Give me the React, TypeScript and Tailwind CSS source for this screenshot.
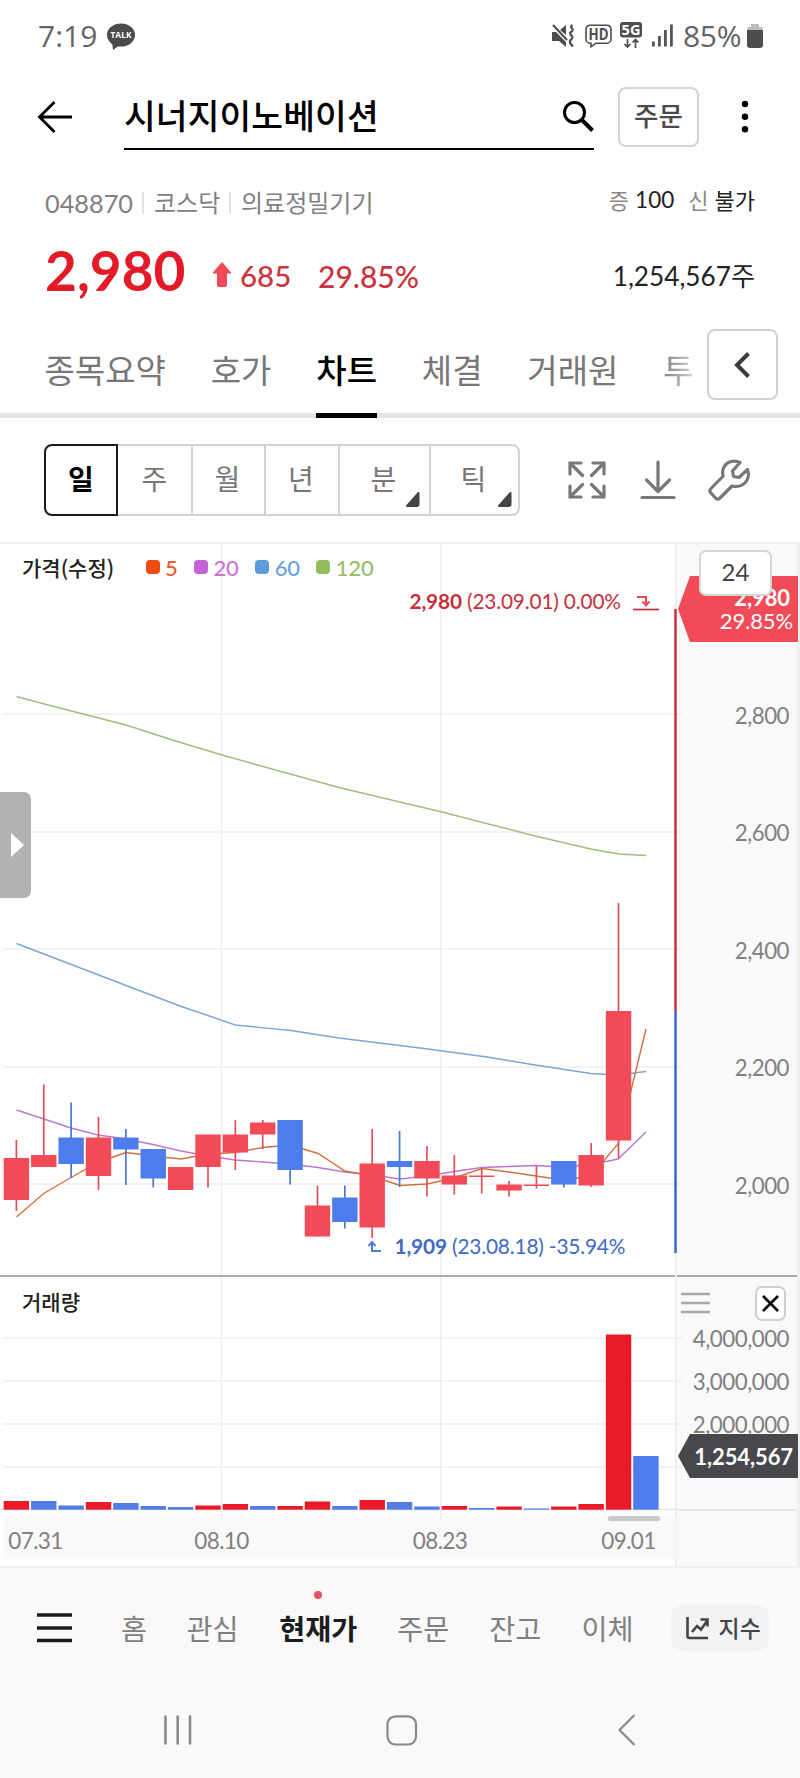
import type { ReactNode } from "react";

type Candle = {
  up: boolean;
  open: number;
  close: number;
  high: number;
  low: number;
  volume: number;
};

// y positions on the price pane, volume is the top of the bar
const candles: Candle[] = [
  { up: true, open: 1158, close: 1200, high: 1140, low: 1211, volume: 1501 },
  { up: true, open: 1155, close: 1167, high: 1084.5, low: 1167, volume: 1501 },
  { up: false, open: 1137.5, close: 1164, high: 1102.5, low: 1178, volume: 1505.5 },
  { up: true, open: 1137.5, close: 1176, high: 1117, low: 1190, volume: 1502 },
  { up: false, open: 1137.5, close: 1149.5, high: 1129, low: 1185, volume: 1503 },
  { up: false, open: 1149, close: 1178.5, high: 1149, low: 1187.5, volume: 1506 },
  { up: true, open: 1167, close: 1190, high: 1167, low: 1190, volume: 1507 },
  { up: true, open: 1134.5, close: 1167, high: 1134.5, low: 1187.5, volume: 1505.5 },
  { up: true, open: 1134.5, close: 1152.5, high: 1120, low: 1170, volume: 1504 },
  { up: true, open: 1122.5, close: 1134.5, high: 1120, low: 1149, volume: 1506 },
  { up: false, open: 1120, close: 1170, high: 1120, low: 1184.5, volume: 1506 },
  { up: true, open: 1205.5, close: 1236.5, high: 1185.5, low: 1236.5, volume: 1501.5 },
  { up: false, open: 1197.5, close: 1222, high: 1185.5, low: 1228.5, volume: 1506 },
  { up: true, open: 1163.5, close: 1227.5, high: 1129, low: 1238, volume: 1500 },
  { up: false, open: 1161, close: 1167, high: 1131, low: 1187, volume: 1502 },
  { up: true, open: 1161, close: 1178.5, high: 1146, low: 1196.5, volume: 1506.5 },
  { up: true, open: 1175.5, close: 1184.5, high: 1155, low: 1194.5, volume: 1506 },
  { up: true, open: 1175.5, close: 1177, high: 1168, low: 1193.5, volume: 1508 },
  { up: true, open: 1184.5, close: 1190.5, high: 1181, low: 1196.5, volume: 1506.5 },
  { up: true, open: 1184.5, close: 1186, high: 1166, low: 1188.5, volume: 1508.5 },
  { up: false, open: 1161, close: 1184.5, high: 1161, low: 1187.5, volume: 1506.5 },
  { up: true, open: 1155, close: 1185.5, high: 1143, low: 1187, volume: 1504 },
  { up: true, open: 1011, close: 1140.5, high: 903, low: 1158.5, volume: 1334.5 },
];

const volumeUp = [
  true, false, false, true, false, false, false, true, true, false, true, true,
  false, true, false, false, true, false, true, false, true, true, true,
];

const STEP = 27.37;
const centerX = (i: number) => 16.4 + i * STEP;

const averages = [
  {
    color: "#a3bd7c",
    points:
      "16.5,696.5 48,705 87,715 126,725 174,740.5 222,755 281,771.5 341,788 442,812 535,836 593,849.5 619,854 646,855.5",
  },
  {
    color: "#7aa8d4",
    points:
      "16.5,943.5 130,987 180,1006 235.5,1025 291,1030.5 339,1038 428,1049 487,1057 535,1065 591,1073.5 618,1075 646,1071.5",
  },
  {
    color: "#bc78cf",
    points:
      "16.5,1110 44,1119 71,1128 98,1135 126,1139 153,1144.5 181,1151 208,1156 235,1160 263,1162 290,1164 318,1167.5 345,1172 372,1175 400,1179 427,1176 454,1171.5 482,1167.5 509,1166.5 536,1165.5 563,1167 591,1164.5 618,1159 646,1132",
  },
  {
    color: "#d2713f",
    points:
      "16.5,1217 43.7,1193.5 71,1177.5 98.7,1162 126,1152.5 153,1156 181,1159 208,1154 235,1152.5 263,1147.5 290,1145 318,1153.5 345,1171 372,1176 400,1185.5 427,1184 454,1178 482,1168.5 509,1172 536,1176 563,1180 591,1176 618,1144 646,1029",
  },
];

const legend = [
  { label: "5", box: "bg-[#ee4b12]", text: "text-[#ee5a2a]" },
  { label: "20", box: "bg-[#c462d8]", text: "text-[#c774d8]" },
  { label: "60", box: "bg-[#5d9bdc]", text: "text-[#6a9fd8]" },
  { label: "120", box: "bg-[#93bd5f]", text: "text-[#97bd68]" },
];

function StatusBar() {
  return (
    <div className="flex h-[72px] items-center pl-[38px] pr-[37px] font-['Open_Sans',sans-serif] text-[#646464]">
      <span className="w-[69px] text-[30px] leading-none">7:19</span>
      <svg width="28" height="28" viewBox="0 0 28 28" className="mt-[2px]">
        <ellipse cx="14" cy="12" rx="14" ry="11.5" fill="#4a4a4a" />
        <path d="M5 18 L6 27 L14 21Z" fill="#4a4a4a" />
        <text x="14" y="15.200" textAnchor="middle" fontSize="9" fontWeight="700" fill="#fff" fontFamily="Open Sans" textLength="21" lengthAdjust="spacingAndGlyphs">TALK</text>
      </svg>
      <div className="ml-auto flex items-center">
        <svg width="23" height="24" viewBox="0 0 23 24" fill="#4d4d4d">
          <path d="M0 8h4l10 10v5l-7-6H0zM8 6l6-5v10z" />
          <path d="M1 1 15 16" stroke="#4d4d4d" strokeWidth="2" />
          <path d="M20.500 1c-4 2.500 1.500 3 0 5.500s-3.500 1.500-2 4 3 1.500 1.500 4-3 1.500-2 4 1.500 2.500 3 4" fill="none" stroke="#4d4d4d" strokeWidth="2.200" />
        </svg>
        <svg width="27" height="24" viewBox="0 0 27 24" className="ml-[10px]">
          <path d="M5 1.200h17a4 4 0 0 1 4 4v10a4 4 0 0 1-4 4H11l-5 3.500v-3.500H5a4 4 0 0 1-4-4v-10a4 4 0 0 1 4-4z" fill="none" stroke="#4d4d4d" strokeWidth="1.600" />
          <text x="13.5" y="15.800" textAnchor="middle" fontSize="15.500" fontWeight="700" fill="#4d4d4d" fontFamily="Open Sans" textLength="20" lengthAdjust="spacingAndGlyphs">HD</text>
        </svg>
        <svg width="22" height="28" viewBox="0 0 22 28" className="ml-[8px]">
          <rect width="22" height="15.500" rx="3" fill="#4d4d4d" />
          <text x="11" y="13" textAnchor="middle" fontSize="14.500" fontWeight="700" fill="#fff" fontFamily="Open Sans">5G</text>
          <path d="M7.500 17v8M4.500 22l3 3 3-3M15.500 26v-8M12.500 20.500l3-3 3 3" fill="none" stroke="#4d4d4d" strokeWidth="1.700" />
        </svg>
        <svg width="21" height="24" viewBox="0 0 21 24" fill="#555" className="ml-[10px]">
          <rect x="0" y="17.500" width="2.800" height="5" />
          <rect x="6" y="12" width="2.800" height="10.500" />
          <rect x="12" y="6" width="2.800" height="16.500" />
          <rect x="18" y="0.500" width="2.800" height="22" />
        </svg>
        <span className="ml-[10px] w-[60px] whitespace-nowrap text-[30px] leading-none tracking-[-0.3px]">85%</span>
        <svg width="16" height="26" viewBox="0 0 16 26" className="ml-[4px]">
          <path d="M4 1h8v3h3.500v6H.5V4H4z" fill="#bdbdbd" />
          <path d="M0 7h16v15a3 3 0 0 1-3 3H3a3 3 0 0 1-3-3z" fill="#4d4d4d" />
        </svg>
      </div>
    </div>
  );
}

function Header() {
  return (
    <div className="flex h-[90px] items-center pl-[37px]">
      <svg width="36" height="34" viewBox="0 0 36 34" fill="none" stroke="#000" strokeWidth="2.800">
        <path d="M35 17H3M17.500 2 2.500 17l15 15" />
      </svg>
      <div className="ml-[51px] flex h-[66px] w-[470px] items-center justify-between border-b-2 border-black">
        <h1 className="-mt-[4px] whitespace-nowrap text-[34.500px] font-medium leading-none tracking-[0.1px] text-black">시너지이노베이션</h1>
        <svg width="31" height="31" viewBox="0 0 31 31" fill="none" stroke="#000">
          <circle cx="11.500" cy="11.500" r="10" strokeWidth="3" />
          <path d="M19 19 29.500 29.500" strokeWidth="4" />
        </svg>
      </div>
      <button className="ml-[24px] flex h-[60px] w-[81px] items-center justify-center rounded-[8px] border-2 border-[#d2d5d5] pb-[4px] text-[26.500px] font-medium text-[#4a4a4a]">
        주문
      </button>
      <svg width="8" height="34" viewBox="0 0 8 34" className="ml-[42px]">
        <circle cx="4" cy="4" r="3.200" />
        <circle cx="4" cy="16.700" r="3.200" />
        <circle cx="4" cy="29.300" r="3.200" />
      </svg>
    </div>
  );
}

function StockInfo() {
  return (
    <div className="flex h-[147px] flex-col px-[45px] font-['Lato','Noto_Sans_CJK_KR',sans-serif]">
      <div className="flex h-[80px] items-center justify-between">
        <div className="flex items-center pt-[3px] text-[24px] leading-none text-[#808080]">
          <span className="w-[97px] text-[25.300px]">048870</span>
          <span className="h-[22px] w-[2px] bg-[#e2e2e2]" />
          <span className="ml-[10px] w-[75px]">코스닥</span>
          <span className="h-[22px] w-[2px] bg-[#e2e2e2]" />
          <span className="ml-[10px]">의료정밀기기</span>
        </div>
        <div className="flex items-center gap-[6px] pb-[3px] text-[22px] leading-none text-[#222]">
          <span className="text-[#888]">증</span>
          <span className="text-[22.500px]">100</span>
          <span className="ml-[8px] text-[#888]">신</span>
          <span>불가</span>
        </div>
      </div>
      <div className="flex h-[59px] items-center leading-none">
        <strong className="-mt-[2px] w-[167px] text-[55px] font-bold text-[#e31b28]">2,980</strong>
        <svg width="20" height="25" viewBox="0 0 20 25" className="mt-[5px]">
          <path d="M10 0.500 19 11h-4.500v12a1.500 1.500 0 0 1-1.500 1.500H7A1.500 1.500 0 0 1 5.500 23V11H1z" fill="#f04b57" stroke="#f04b57" strokeLinejoin="round" />
        </svg>
        <span className="ml-[8px] mt-[8px] w-[78px] text-[29.500px] font-medium text-[#cb3340]">685</span>
        <span className="mt-[8px] text-[30px] font-medium text-[#cb3340]">29.85%</span>
        <span className="ml-auto mt-[10px] text-[26.200px] text-[#222]">1,254,567주</span>
      </div>
    </div>
  );
}

function Tabs() {
  const tabs = ["종목요약", "호가", "차트", "체결", "거래원", "투"];
  return (
    <div className="relative flex h-[109px] items-end gap-[44.800px] border-b-[5px] border-[#e2e4e4] pl-[44.500px]">
      {tabs.map((tab) =>
        tab === "차트" ? (
          <span key={tab} className="-mb-[5px] flex h-[77px] justify-center border-b-[5px] border-black pt-[12px] text-[33px] font-medium leading-none text-black">
            {tab}
          </span>
        ) : (
          <span key={tab} className="h-[72px] whitespace-nowrap pt-[12px] text-[33px] leading-none text-[#777]">
            {tab}
          </span>
        )
      )}
      <div className="absolute right-0 top-0 flex h-[103px] w-[140px] items-start bg-linear-to-r from-white/0 via-white via-35% to-white pl-[47px] pt-[20px]">
        <button className="flex h-[71px] w-[71px] items-center justify-center rounded-[8px] border-2 border-[#cfd2d2] bg-white pr-[2px]">
          <svg width="18" height="28" viewBox="0 0 18 28" fill="none" stroke="#3c3c3e" strokeWidth="4">
            <path d="M15.500 2.500 4 14l11.500 11.500" />
          </svg>
        </button>
      </div>
    </div>
  );
}

function Corner({ className }: { className: string }) {
  return (
    <svg width="16" height="16" viewBox="0 0 16 16" className={`absolute bottom-[6px] ${className}`}>
      <path d="M13.500 1v11.500a1.500 1.500 0 0 1-1.500 1.500H2z" fill="#444447" stroke="#444447" strokeWidth="2" strokeLinejoin="round" />
    </svg>
  );
}

function Toolbar() {
  const cell = "relative flex items-center justify-center border-l-2 border-[#d2d4d4] pb-[4px] pr-[2px]";
  return (
    <div className="flex h-[124px] items-center pl-[44px] pb-[1px]">
      <div className="flex h-[72px] w-[476px] rounded-[8px] text-[28px] text-[#777]">
        <div className="flex w-[74px] items-center justify-center rounded-l-[8px] border-2 border-[#1a1a1c] pb-[4px] font-bold text-black">일</div>
        <div className="grid flex-1 grid-cols-[73px_73px_74px_91px_1fr] rounded-r-[8px] border-y-2 border-r-2 border-[#d2d4d4]">
          <div className="flex items-center justify-center pb-[4px]">주</div>
          <div className={cell}>월</div>
          <div className={cell}>년</div>
          <div className={cell}>분<Corner className="right-[8px]" /></div>
          <div className={cell}>틱<Corner className="right-[5px]" /></div>
        </div>
      </div>
      <svg width="38" height="38" viewBox="0 0 38 38" fill="none" stroke="#77787b" strokeWidth="3.200" strokeLinecap="round" strokeLinejoin="round" className="ml-[48px]">
        <path d="M2 13V2h11M2 2l12.500 12.500M25 2h11v11M36 2 23.500 14.500M2 25v11h11M2 36l12.500-12.500M36 25v11H25M36 36 23.500 23.500" />
      </svg>
      <svg width="36" height="40" viewBox="0 0 36 40" fill="none" stroke="#77787b" strokeWidth="3.200" strokeLinecap="round" strokeLinejoin="round" className="ml-[34px]">
        <path d="M18 2v29M6.500 20 18 31.500 29.500 20M2 37.500h32" />
      </svg>
      <svg width="42" height="42" viewBox="0 0 42 42" fill="none" stroke="#77787b" strokeWidth="3.200" strokeLinejoin="round" className="ml-[32px]">
        <path d="M32 3.500C26 .5 19 2.500 16 8c-1.600 3-1.800 6-.8 9L3 29.500c-1.500 1.500-1.500 3 0 4.500l4.500 5c1.500 1.500 3 1.500 4.500 0L24 27c6 1.500 12-.5 15-6 1.800-3.300 1.800-7 .5-10.500L31 18.500l-5.500-1-1-5.500z" />
      </svg>
    </div>
  );
}

function ChartCanvas() {
  return (
    <svg width="684" height="1021" viewBox="0 544 684 1021" className="relative z-10 block max-w-none">
      <path d="M4 1516h672v43H4z" fill="#f9f9f9" />
      <g stroke="#eeeeee" strokeWidth="1.500">
        {[714, 832, 949, 1067, 1184, 1338, 1381, 1424, 1467].map((y) => (
          <path key={y} d={`M3 ${y}H683`} />
        ))}
        <path d="M221.500 543V1520M440.500 543V1520" />
      </g>
      <path d="M0 1509.500H676" stroke="#e8e4e4" strokeWidth="1.500" />
      <path d="M0 1276H675" stroke="#a9aeac" strokeWidth="2" />
      <g fill="none" strokeWidth="1.400">
        {averages.map((ma) => (
          <polyline key={ma.color} points={ma.points} stroke={ma.color} />
        ))}
      </g>
      {candles.map((c, i) => {
        const fill = c.up ? "#f14b57" : "#4f7cec";
        const x = centerX(i);
        return (
          <g key={i}>
            <path d={`M${x} ${c.high}V${c.low}`} stroke={c.up ? "#e0505c" : "#4a78cc"} strokeWidth="1.700" />
            <rect x={x - 12.7} y={c.open} width="25.400" height={c.close - c.open} fill={fill} />
            <rect x={x - 12.7} y={c.volume} width="25.400" height={1509.7 - c.volume} fill={volumeUp[i] ? "#e81a27" : "#517de4"} />
          </g>
        );
      })}
      <rect x={centerX(23) - 12.7} y="1456" width="25.400" height="53.700" fill="#4f7cec" />
      <path d="M675.500 609V1011" stroke="#c8303c" strokeWidth="2.500" />
      <path d="M675.500 1011V1253" stroke="#3d66cc" strokeWidth="2.500" />
      <rect x="608" y="1516" width="52" height="5" rx="2.500" fill="#c8c8c8" />

      <g fontFamily="Lato" fontSize="20.800" letterSpacing="-0.160">
        <text x="409.500" y="608.500" fill="#c6303c">
          <tspan fontWeight="700">2,980</tspan> (23.09.01) 0.00%
        </text>
        <text x="394.500" y="1253.500" fill="#3f6ac6">
          <tspan fontWeight="700">1,909</tspan> (23.08.18) -35.94%
        </text>
      </g>
      <path d="M637 597h9v7M642.500 601.500l3.500 4 3.500-4" fill="none" stroke="#ea4854" strokeWidth="2" />
      <path d="M633 609.500h26" stroke="#c6303c" strokeWidth="1.700" />
      <path d="M381 1251h-9v-8M368.500 1246l3.500-4 3.500 4" fill="none" stroke="#4f7ce0" strokeWidth="2" />
      <g fontFamily="Lato" fontSize="22.500" letterSpacing="-0.600" fill="#808080" textAnchor="middle">
        <text x="35.500" y="1548.500">07.31</text>
        <text x="221.500" y="1548.500">08.10</text>
        <text x="440" y="1548.500">08.23</text>
        <text x="628.500" y="1548.500">09.01</text>
      </g>
    </svg>
  );
}

function AxisLabel({ children }: { children: ReactNode }) {
  return <div className="flex h-[117.400px] items-center justify-end">{children}</div>;
}

function PriceAxis() {
  return (
    <div className="relative flex w-[125px] flex-col border-l-2 border-r-3 border-[#efefef] bg-[#f9f9f9] font-['Lato',sans-serif] text-[22.300px] leading-none tracking-[-0.500px] text-[#808080]">
      <div className="h-[733px] border-b-2 border-[#a9aeac] pr-[8px] pt-[113.500px]">
        <AxisLabel>2,800</AxisLabel>
        <AxisLabel>2,600</AxisLabel>
        <AxisLabel>2,400</AxisLabel>
        <AxisLabel>2,200</AxisLabel>
        <AxisLabel>2,000</AxisLabel>
      </div>
      <div className="flex h-[234px] flex-col border-b-2 border-[#e6e6e6]">
        <div className="flex h-[44px] items-end justify-between pl-[4px] pr-[11px]">
          <svg width="29" height="36" viewBox="0 0 29 36" stroke="#a8a8a8" strokeWidth="2.500">
            <path d="M0 9h29M0 18h29M0 27h29" />
          </svg>
          <button className="flex h-[35px] w-[31px] items-center justify-center rounded-[7px] border-2 border-[#cfcfcf] bg-white">
            <svg width="17" height="17" viewBox="0 0 17 17" stroke="#000" strokeWidth="2.600">
              <path d="M1 1l15 15M16 1 1 16" />
            </svg>
          </button>
        </div>
        <div className="-mt-[4px] flex flex-col pr-[8px] text-right leading-[43px]">
          <span>4,000,000</span>
          <span>3,000,000</span>
          <span>2,000,000</span>
        </div>
      </div>
      <div className="absolute -right-[1px] top-[32px] flex h-[66px] w-[120px] flex-col items-end justify-center gap-[1px] bg-[#f14b57] pr-[5px] text-[22px] tracking-[-0.100px] text-white [clip-path:polygon(12px_0,100%_0,100%_100%,12px_100%,0_50%)]">
        <span className="pr-[3px] font-bold">2,980</span>
        <span>29.85%</span>
      </div>
      <div className="absolute left-[22px] top-[6px] flex h-[46px] w-[73px] items-center justify-center rounded-[7px] border-2 border-[#d4d6d6] bg-white pb-[2px] text-[24px] tracking-normal text-[#444]">24</div>
      <div className="absolute -right-[1px] top-[890px] flex h-[44px] w-[120px] items-center justify-end bg-[#47484b] pr-[5px] pt-[1px] text-[22px] font-bold tracking-[-0.100px] text-white [clip-path:polygon(12px_0,100%_0,100%_100%,12px_100%,0_50%)]">
        1,254,567
      </div>
    </div>
  );
}

function Chart() {
  return (
    <div className="relative flex h-[1024px] border-t-2 border-[#f0f0f0]">
      <div className="h-full w-[675px]">
        <ChartCanvas />
      </div>
      <PriceAxis />
      <div className="absolute left-[22px] top-[11px] z-10 flex items-center leading-none">
        <span className="w-[123.500px] text-[21px] font-medium text-[#222]">가격(수정)</span>
        {legend.map((item) => (
          <span key={item.label} className="mr-[16.500px] flex items-center gap-[5.500px] font-['Lato',sans-serif]">
            <span className={`size-[14px] rounded-[4px] ${item.box}`} />
            <span className={`pt-[2px] text-[22px] font-medium tracking-[-0.200px] ${item.text}`}>{item.label}</span>
          </span>
        ))}
      </div>
      <span className="absolute left-[22px] top-[747px] z-10 text-[21px] font-medium leading-none text-[#222]">거래량</span>
      <div className="absolute left-0 top-[248px] z-10 flex h-[106px] w-[31px] items-center justify-center rounded-r-[7px] bg-[#b2b2b2] pl-[3px]">
        <svg width="13" height="24" viewBox="0 0 13 24">
          <path d="M0 0 13 12 0 24z" fill="#fff" />
        </svg>
      </div>
    </div>
  );
}

function BottomNav() {
  return (
    <div className="flex flex-1 flex-col border-t-2 border-[#f0f0f0] bg-[#f9f9f9]">
      <div className="flex h-[120px] items-center pl-[37px] text-[28.300px] leading-none text-[#808080]">
        <svg width="35" height="30" viewBox="0 0 35 30" stroke="#1c1c1e" strokeWidth="3.600" className="-mt-[1px]">
          <path d="M0 2h35M0 15h35M0 27.500h35" />
        </svg>
        <span className="ml-[49px]">홈</span>
        <span className="ml-[39.500px]">관심</span>
        <span className="relative ml-[40.500px] font-bold text-[#1c1c1e]">
          현재가
          <i className="absolute -top-[23px] left-[35px] size-[8px] rounded-full bg-[#e9505c]" />
        </span>
        <span className="ml-[40px]">주문</span>
        <span className="ml-[40px]">잔고</span>
        <span className="ml-[40px]">이체</span>
        <div className="ml-[38px] flex h-[46px] w-[98px] items-center gap-[9px] rounded-[12px] bg-[#f1f3f5] pl-[15px] text-[23px] font-medium text-[#444447]">
          <svg width="23" height="23" viewBox="0 0 23 23" fill="none" stroke="#444447" strokeWidth="2.600">
            <path d="M1.500 0v19a2 2 0 0 0 2 2H22M6 15l5-6 4 3.500L21 4M14.500 2.500H21.500V9.500" />
          </svg>
          <span className="-mt-[2px]">지수</span>
        </div>
      </div>
      <div className="flex h-[82px] items-center pl-[163px] pt-[2px]">
        <svg width="29" height="30" viewBox="0 0 29 30" stroke="#8a8a8a" strokeWidth="2.600" strokeLinecap="round">
          <path d="M2.500 1.500v27M14.700 1.500v27M27 1.500v27" />
        </svg>
        <svg width="32" height="31" viewBox="0 0 32 31" fill="none" stroke="#8a8a8a" strokeWidth="2.200" className="ml-[194px]">
          <rect x="1.500" y="1.300" width="28.500" height="28.200" rx="8" />
        </svg>
        <svg width="18" height="32" viewBox="0 0 18 32" fill="none" stroke="#8a8a8a" strokeWidth="2.200" className="ml-[200px]">
          <path d="M16.500 1 1.500 16l15 15" />
        </svg>
      </div>
    </div>
  );
}

export default function App() {
  return (
    <div className="flex h-[1778px] w-[800px] flex-col overflow-hidden bg-[#fefefe] font-['Noto_Sans_CJK_KR',sans-serif]">
      <StatusBar />
      <Header />
      <StockInfo />
      <Tabs />
      <Toolbar />
      <Chart />
      <BottomNav />
    </div>
  );
}
